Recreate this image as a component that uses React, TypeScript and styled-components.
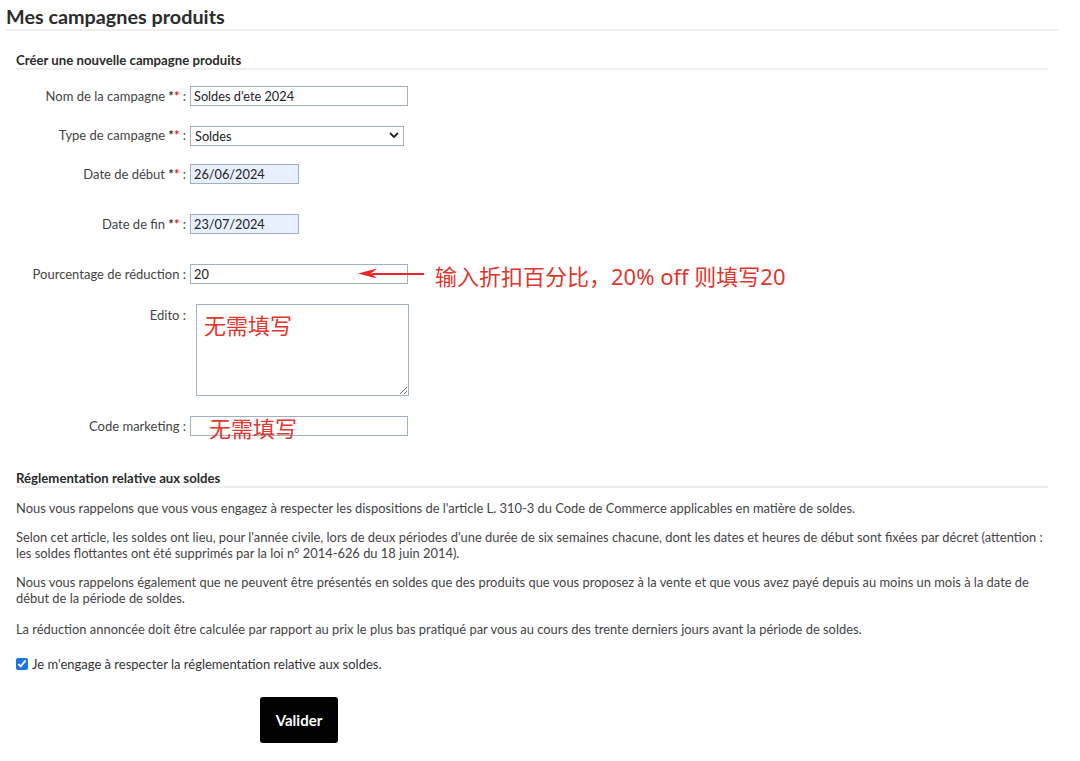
import React from 'react'
import styled, { createGlobalStyle } from 'styled-components'

const GlobalStyle = createGlobalStyle`
	html, body {
		margin: 0;
		padding: 0;
		background: #ffffff;
	}
	body {
		font-family: 'Lato', 'Liberation Sans', Arial, sans-serif;
		color: #444444;
	}
`

const Page = styled.div`
	padding: 4px 0 0 6px;
	width: 1059px;
	box-sizing: border-box;
`

const PageTitle = styled.h1`
	margin: 0;
	font-size: 19.8px;
	line-height: 24px;
	font-weight: 700;
	color: #2b2b2b;
	padding-bottom: 1px;
	border-bottom: 2px solid #efefef;
`

const Section = styled.div`
	padding: 0 11px 0 10px;
`

const SectionTitle = styled.h2<{ $top: number }>`
	margin: ${(p) => p.$top}px 0 0 0;
	font-size: 13.2px;
	line-height: 16px;
	font-weight: 700;
	color: #2b2b2b;
	padding-bottom: 0;
	border-bottom: 2px solid #efefef;
`

const Form = styled.div`
	padding-top: 16px;
`

const Row = styled.div<{ $top: number }>`
	position: relative;
	display: grid;
	grid-template-columns: 170px auto;
	column-gap: 4px;
	align-items: center;
	margin-top: ${(p) => p.$top}px;
`

const TopRow = styled(Row)`
	align-items: start;
`

const Label = styled.label<{ $pad?: number }>`
	text-align: right;
	font-size: 13px;
	line-height: 16px;
	color: #444444;
	padding-top: ${(p) => p.$pad || 0}px;
	white-space: nowrap;
`

const Star = styled.span`
	color: #333333;
	font-weight: 700;
`

const RedStar = styled.span`
	color: #e2231a;
	font-weight: 700;
`

const Field = styled.div`
	display: flex;
	align-items: center;
	height: 20px;
`

const TextInput = styled.input<{ $w: number; $filled?: boolean }>`
	box-sizing: border-box;
	width: ${(p) => p.$w}px;
	height: 20px;
	margin: 0;
	padding: 0 3px;
	border: 1px solid #9fb0c2;
	border-radius: 0;
	background: ${(p) => (p.$filled ? '#e8f0fe' : '#ffffff')};
	font-family: 'Lato', 'Liberation Sans', Arial, sans-serif;
	font-size: 12.75px;
	color: #222222;
	outline: none;
`

const SelectWrap = styled.div`
	position: relative;
	width: 214px;
	height: 20px;
`

const Select = styled.select`
	box-sizing: border-box;
	width: 214px;
	height: 20px;
	margin: 0;
	padding: 0 4px;
	appearance: none;
	border: 1px solid #9fb0c2;
	border-radius: 0;
	background: #ffffff;
	font-family: 'Lato', 'Liberation Sans', Arial, sans-serif;
	font-size: 12.75px;
	color: #222222;
	outline: none;
`

const Chevron = styled.svg`
	position: absolute;
	right: 5px;
	top: 6px;
	pointer-events: none;
`

const AreaField = styled.div`
	display: flex;
`

const TextArea = styled.textarea`
	box-sizing: border-box;
	width: 213px;
	height: 92px;
	margin: 0 0 0 6px;
	padding: 6px 7px;
	border: 1px solid #9fb0c2;
	border-radius: 0;
	background: #ffffff;
	font-family: 'Noto Sans CJK SC', sans-serif;
	font-size: 22px;
	line-height: 26px;
	color: #e2352b;
	resize: both;
	outline: none;
`

const Annotation = styled.span`
	margin-left: 27px;
	padding-top: 4px;
	font-family: 'Noto Sans', 'Noto Sans CJK SC', sans-serif;
	font-size: 22px;
	line-height: 20px;
	color: #e2352b;
	white-space: nowrap;
`

const OverlayNote = styled.span`
	position: absolute;
	left: 193px;
	top: -2px;
	font-family: 'Noto Sans CJK SC', sans-serif;
	font-size: 22px;
	line-height: 26px;
	color: #e2352b;
	pointer-events: none;
	white-space: nowrap;
`

const Arrow = styled.svg`
	position: absolute;
	left: 342px;
	top: 3px;
	pointer-events: none;
`

const Rules = styled.div`
	padding-top: 12px;
`

const Para = styled.p`
	margin: 0 0 13px 0;
	font-size: 12.9px;
	line-height: 16px;
	color: #444444;
`

const LastPara = styled(Para)`
	margin-top: 15px;
`

const CheckRow = styled.label`
	display: flex;
	align-items: center;
	gap: 4px;
	margin-top: 19px;
	font-size: 13px;
	line-height: 16px;
	color: #333333;
`

const Check = styled.input`
	margin: 0;
	width: 12px;
	height: 12px;
	accent-color: #1a73e8;
`

const Actions = styled.div`
	padding: 25px 0 0 244px;
`

const Button = styled.button`
	width: 78px;
	height: 46px;
	border: none;
	border-radius: 3px;
	background: #000000;
	color: #ffffff;
	font-family: 'Lato', 'Liberation Sans', Arial, sans-serif;
	font-size: 15px;
	font-weight: 700;
	cursor: pointer;
`

const Req = () => (
	<>
		{' '}
		<Star>*</Star>
		<RedStar>*</RedStar>
	</>
)

export default function App() {
	const [checked, setChecked] = React.useState(true)

	return (
		<>
			<GlobalStyle />
			<Page>
				<PageTitle>Mes campagnes produits</PageTitle>
				<Section>
					<SectionTitle $top={21}>Créer une nouvelle campagne produits</SectionTitle>
					<Form>
						<Row $top={0}>
							<Label>
								Nom de la campagne
								<Req /> :
							</Label>
							<Field>
								<TextInput $w={218} defaultValue="Soldes d'ete 2024" />
							</Field>
						</Row>
						<Row $top={19}>
							<Label>
								Type de campagne
								<Req /> :
							</Label>
							<Field>
								<SelectWrap>
									<Select defaultValue="soldes">
										<option value="soldes">Soldes</option>
										<option value="promo">Promotion</option>
									</Select>
									<Chevron width="10" height="8" viewBox="0 0 10 8">
										<path d="M1 2 L5 6 L9 2" fill="none" stroke="#222" strokeWidth="1.8" />
									</Chevron>
								</SelectWrap>
							</Field>
						</Row>
						<Row $top={19}>
							<Label>
								Date de début
								<Req /> :
							</Label>
							<Field>
								<TextInput $w={109} $filled defaultValue="26/06/2024" />
							</Field>
						</Row>
						<Row $top={30}>
							<Label>
								Date de fin
								<Req /> :
							</Label>
							<Field>
								<TextInput $w={109} $filled defaultValue="23/07/2024" />
							</Field>
						</Row>
						<Row $top={30}>
							<Label>Pourcentage de réduction :</Label>
							<Field>
								<TextInput $w={218} defaultValue="20" />
								<Annotation>输入折扣百分比，20% off 则填写20</Annotation>
							</Field>
							<Arrow width="68" height="14" viewBox="0 0 68 14">
								<path d="M66 7 L14 7" stroke="#e8262a" strokeWidth="2" />
								<path d="M0 6.5 L19 1.5 L13 6.5 L19 11.5 Z" fill="#e8262a" />
							</Arrow>
						</Row>
						<TopRow $top={20}>
							<Label $pad={3}>Edito :</Label>
							<AreaField>
								<TextArea defaultValue="无需填写" />
							</AreaField>
						</TopRow>
						<Row $top={20}>
							<Label>Code marketing :</Label>
							<Field>
								<TextInput $w={218} defaultValue="" />
							</Field>
							<OverlayNote>无需填写</OverlayNote>
						</Row>
					</Form>

					<SectionTitle $top={34}>Réglementation relative aux soldes</SectionTitle>
					<Rules>
						<Para>
							Nous vous rappelons que vous vous engagez à respecter les dispositions de l'article L. 310-3 du Code de
							Commerce applicables en matière de soldes.
						</Para>
						<Para>
							Selon cet article, les soldes ont lieu, pour l'année civile, lors de deux périodes d'une durée de six semaines
							chacune, dont les dates et heures de début sont fixées par décret (attention : les soldes flottantes ont été
							supprimés par la loi n° 2014-626 du 18 juin 2014).
						</Para>
						<Para>
							Nous vous rappelons également que ne peuvent être présentés en soldes que des produits que vous proposez à la
							vente et que vous avez payé depuis au moins un mois à la date de début de la période de soldes.
						</Para>
						<LastPara>
							La réduction annoncée doit être calculée par rapport au prix le plus bas pratiqué par vous au cours des trente
							derniers jours avant la période de soldes.
						</LastPara>
					</Rules>
					<CheckRow>
						<Check type="checkbox" checked={checked} onChange={(e) => setChecked(e.target.checked)} />
						Je m'engage à respecter la réglementation relative aux soldes.
					</CheckRow>
					<Actions>
						<Button type="button">Valider</Button>
					</Actions>
				</Section>
			</Page>
		</>
	)
}
